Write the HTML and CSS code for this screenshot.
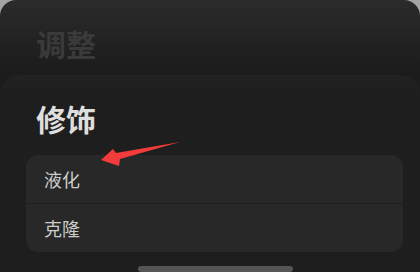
FILE: index.html
```html
<!DOCTYPE html>
<html>
<head>
  <meta charset="utf-8">
  <title>修饰</title>
  <link rel="stylesheet" href="styles.css">
</head>
<body>
  <div class="screen">
    <div class="backdrop">
      <div class="back-card">
        <h2 class="back-title">调整</h2>
      </div>
    </div>
    <div class="sheet">
      <h2 class="sheet-title">修饰</h2>
      <div class="menu-group">
        <div class="menu-item">液化</div>
        <div class="menu-item">克隆</div>
      </div>
      <div class="home-bar"></div>
    </div>
    <svg class="arrow" width="420" height="272" viewBox="0 0 420 272">
      <polygon points="101,160 113,149 116,153 180,142 120,159 119,166" fill="#f23b3b"/>
    </svg>
  </div>
</body>
</html>
```

FILE: styles.css
```css
body {
  margin: 0;
  background-color: #1c1c1c;
  font-family: "Noto Sans CJK SC", "Noto Sans", sans-serif;
}

.screen {
  position: relative;
  width: 420px;
  height: 272px;
  overflow: hidden;
  background-color: #1c1c1c;
}

.backdrop {
  background-color: #a4a4a4;
}

.back-card {
  height: 75px;
  padding-left: 36px;
  box-sizing: border-box;
  border-radius: 16px 16px 0 0;
  background: linear-gradient(#2b2b2b, #1b1b1b);
}

.back-title {
  margin: 0;
  padding-top: 25px;
  font-size: 30px;
  line-height: 36px;
  font-weight: bold;
  color: #3a3a3a;
}

.sheet {
  height: 197px;
  padding: 0 17px 0 26px;
  border-radius: 20px 20px 0 0;
  background: linear-gradient(#222222, #1e1e1e 20px);
}

.sheet-title {
  margin: 0;
  padding: 24px 0 0 10px;
  font-size: 30px;
  line-height: 38px;
  font-weight: bold;
  color: #dedede;
}

.menu-group {
  margin-top: 18px;
  border-radius: 12px;
  background-color: #282828;
  overflow: hidden;
}

.menu-item {
  height: 48px;
  padding-left: 18px;
  font-size: 18px;
  line-height: 48px;
  color: #cccccc;
}

.menu-item + .menu-item {
  border-top: 1px solid #1f1f1f;
}

.home-bar {
  width: 155px;
  height: 6px;
  margin: 14px 0 0 112px;
  border-radius: 3px;
  background-color: #555555;
}

.arrow {
  position: absolute;
  left: 0;
  top: 0;
}
```
